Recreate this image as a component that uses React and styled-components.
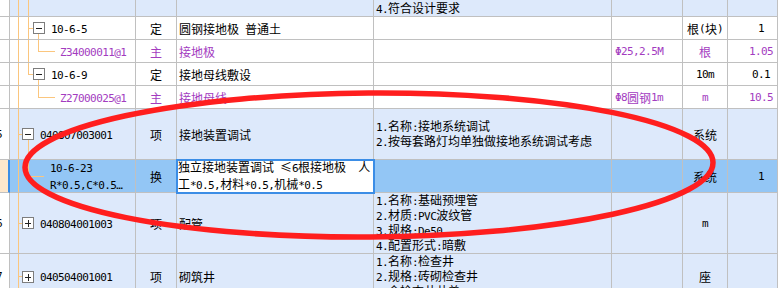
import React from "react";
import styled, { createGlobalStyle } from "styled-components";

const COLS = "10px 126px 41px 197px 238px 71px 45px 1fr";
const LINE = "#c0c0c0";
const TREE = "#fbc67e";
const PURPLE = "#a33cbf";

const tones = {
  white: "#ffffff",
  item: "#dde9fb",
  selected: "#93c6f5",
};

const GlobalStyle = createGlobalStyle`
  html, body {
    margin: 0;
    padding: 0;
    background: #ffffff;
  }
  body {
    overflow: hidden;
  }
`;

const Viewport = styled.div`
  position: relative;
  width: 778px;
  height: 288px;
  overflow: hidden;
  font-family: "Noto Sans CJK SC", sans-serif;
  font-size: 12px;
  color: #000;
`;

const Table = styled.div`
  display: flex;
  flex-direction: column;
`;

const Row = styled.div`
  display: grid;
  grid-template-columns: ${COLS};
  flex-shrink: 0;
  height: ${(p) => p.$h}px;
  margin-top: ${(p) => p.$offset || 0}px;
  background: ${(p) => tones[p.$tone]};
  color: ${(p) => (p.$purple ? PURPLE : "#000")};
`;

const Cell = styled.div`
  position: relative;
  box-sizing: border-box;
  display: flex;
  align-items: center;
  justify-content: ${(p) =>
    p.$align === "center" ? "center" : p.$align === "right" ? "flex-end" : "flex-start"};
  padding: 0 ${(p) => p.$pr ?? 2}px 0 ${(p) => p.$pl ?? 2}px;
  border-right: 1px solid ${LINE};
  border-bottom: 1px solid ${LINE};
  overflow: hidden;
  white-space: pre;
  line-height: 13px;
`;

const RowHead = styled(Cell)`
  justify-content: flex-end;
  padding: 0 7px 0 0;
  background: ${(p) => (p.$active ? "#fde7cc" : "#ffffff")};
  border-right: ${(p) => (p.$active ? "2px solid #3b8de6" : `1px solid ${LINE}`)};
`;

const CodeCell = styled(Cell)`
  padding-left: ${(p) => p.$indent}px;
  gap: ${(p) => p.$gap}px;
`;

const EditCell = styled(Cell)`
  z-index: 2;
  padding-left: 1px;
  background: #ffffff;
  outline: 2px solid #3b8de6;
  outline-offset: -1px;
`;

const Lines = styled.div`
  position: relative;
  display: flex;
  flex-direction: column;
  line-height: ${(p) => p.$lh || 13}px;
  white-space: pre;
`;

const GuideLayer = styled.svg`
  position: absolute;
  left: 0;
  top: 0;
  width: 100%;
  height: 100%;
  pointer-events: none;
`;

const ToggleBox = styled.svg`
  position: relative;
  flex-shrink: 0;
  display: block;
`;

const Lat = styled.span`
  font-family: "DejaVu Sans Mono", "Liberation Mono", monospace;
  font-size: 11px;
  letter-spacing: -0.6px;
`;

const Annotation = styled.svg`
  position: absolute;
  left: 0;
  top: 0;
  pointer-events: none;
`;

const LATIN_SPLIT = /([\x20-\x7e\u03a6\u2026]+)/;
const LATIN_ONLY = /^[\x20-\x7e\u03a6\u2026]+$/;

function Txt({ children }) {
  const parts = String(children).split(LATIN_SPLIT);
  return (
    <>
      {parts.map((p, i) =>
        p === "" ? null : LATIN_ONLY.test(p) ? (
          <Lat key={i}>{p}</Lat>
        ) : (
          <React.Fragment key={i}>{p}</React.Fragment>
        )
      )}
    </>
  );
}

function Toggle({ open }) {
  return (
    <ToggleBox width="12" height="12" viewBox="0 0 12 12" shapeRendering="crispEdges">
      <rect x="0.5" y="0.5" width="11" height="11" fill="#fff" stroke="#7d7d7d" />
      <line x1="3" y1="6.5" x2="9" y2="6.5" stroke="#222" />
      {!open && <line x1="6.5" y1="3" x2="6.5" y2="10" stroke="#222" />}
    </ToggleBox>
  );
}

// tree guide segments, in cell coordinates
function guides(kind, h, last) {
  const mid = Math.floor((h - 1) / 2);
  const v = (x, y1, y2) => ({ x1: x + 0.5, y1, x2: x + 0.5, y2 });
  const hz = (x1, x2) => ({ x1, y1: mid + 0.5, x2, y2: mid + 0.5 });
  switch (kind) {
    case "item":
      return [v(8, 0, h), hz(8, 12)];
    case "itemOpen":
      return [v(8, 0, h), hz(8, 12), v(18, mid + 6, h)];
    case "quota":
      return [v(8, 0, h), v(18, 0, last ? mid : h), hz(18, 23), v(28, mid + 6, h)];
    case "main":
      return [v(8, 0, h), ...(last ? [] : [v(18, 0, h)]), v(28, 0, mid + 1), hz(28, 45)];
    case "sub":
      return [v(8, 0, h), v(18, 0, mid + 1), hz(18, 34)];
    default:
      return [v(8, 0, h)];
  }
}

const layout = {
  item: { indent: 12, gap: 6, toggle: true },
  itemOpen: { indent: 12, gap: 6, toggle: true },
  quota: { indent: 23, gap: 6, toggle: true },
  main: { indent: 50, gap: 0 },
  sub: { indent: 40, gap: 0 },
};

const rows = [
  {
    h: 62,
    offset: -45,
    tone: "item",
    no: "4",
    kind: "itemOpen",
    code: "040807001001",
    type: "项",
    name: "接地极",
    desc: ["1.名称:接地极", "2.材质:圆钢", "3.规格:Φ25,L=2.5m", "4.符合设计要求"],
    unit: "根",
  },
  { h: 23, tone: "white", kind: "quota", code: "10-6-5", type: "定", name: "圆钢接地极 普通土", unit: "根(块)", qty: "1", pr: 13 },
  { h: 23, tone: "white", kind: "main", purple: true, code: "Z34000011@1", type: "主", name: "接地极", spec: "Φ25,2.5M", unit: "根", qty: "1.05", pr: 4 },
  { h: 23, tone: "white", kind: "quota", last: true, code: "10-6-9", type: "定", name: "接地母线敷设", unit: "10m", qty: "0.1", pr: 7 },
  { h: 23, tone: "white", kind: "main", last: true, purple: true, code: "Z27000025@1", type: "主", name: "接地母线", spec: "Φ8圆钢1m", unit: "m", qty: "10.5", pr: 4 },
  {
    h: 51,
    tone: "item",
    no: "5",
    kind: "itemOpen",
    code: "040807003001",
    type: "项",
    name: "接地装置调试",
    desc: ["1.名称:接地系统调试", "2.按每套路灯均单独做接地系统调试考虑"],
    unit: "系统",
  },
  {
    h: 33,
    tone: "selected",
    active: true,
    kind: "sub",
    code: ["10-6-23", "R*0.5,C*0.5…"],
    type: "换",
    edit: ["独立接地装置调试 ≤6根接地极  人", "工*0.5,材料*0.5,机械*0.5"],
    unit: "系统",
    qty: "1",
    pr: 13,
  },
  {
    h: 61,
    tone: "item",
    no: "6",
    kind: "item",
    code: "040804001003",
    type: "项",
    name: "配管",
    desc: ["1.名称:基础预埋管", "2.材质:PVC波纹管", "3.规格:De50", "4.配置形式:暗敷"],
    unit: "m",
  },
  {
    h: 46,
    tone: "item",
    no: "7",
    kind: "item",
    code: "040504001001",
    type: "项",
    name: "砌筑井",
    desc: ["1.名称:检查井", "2.规格:砖砌检查井", "3.含检查井井盖"],
    unit: "座",
  },
];

function CodeColumn({ row }) {
  const cfg = layout[row.kind];
  const segs = guides(row.kind, row.h, row.last);
  return (
    <CodeCell $indent={cfg.indent} $gap={cfg.gap} $pr={0}>
      <GuideLayer>
        {segs.map((s, i) => (
          <line key={i} {...s} stroke={TREE} strokeWidth="1" shapeRendering="crispEdges" />
        ))}
      </GuideLayer>
      {cfg.toggle && <Toggle open={row.kind !== "item"} />}
      <Lines $lh={15}>
        {(Array.isArray(row.code) ? row.code : [row.code]).map((c) => (
          <span key={c}>
            <Txt>{c}</Txt>
          </span>
        ))}
      </Lines>
    </CodeCell>
  );
}

function GridRow({ row }) {
  return (
    <Row $h={row.h} $offset={row.offset} $tone={row.tone} $purple={row.purple}>
      <RowHead $active={row.active}>{row.no && <Txt>{row.no}</Txt>}</RowHead>
      <CodeColumn row={row} />
      <Cell $align="center">{row.type}</Cell>
      {row.edit ? (
        <EditCell>
          <Lines $lh={15}>
            {row.edit.map((t) => (
              <span key={t}>
                <Txt>{t}</Txt>
              </span>
            ))}
          </Lines>
        </EditCell>
      ) : (
        <Cell>
          <Txt>{row.name}</Txt>
        </Cell>
      )}
      <Cell>
        <Lines>
          {(row.desc || []).map((d) => (
            <span key={d}>
              <Txt>{d}</Txt>
            </span>
          ))}
        </Lines>
      </Cell>
      <Cell $pl={3}>{row.spec && <Txt>{row.spec}</Txt>}</Cell>
      <Cell $align="center" $pl={0} $pr={0}>
        {row.unit && <Txt>{row.unit}</Txt>}
      </Cell>
      <Cell $align="right" $pr={row.pr}>
        {row.qty && <Txt>{row.qty}</Txt>}
      </Cell>
    </Row>
  );
}

export default function App() {
  return (
    <>
      <GlobalStyle />
      <Viewport>
        <Table>
          {rows.map((r, i) => (
            <GridRow key={i} row={r} />
          ))}
        </Table>
        <Annotation width="778" height="288" viewBox="0 0 778 288">
          <ellipse
            cx="369"
            cy="165"
            rx="344"
            ry="72"
            fill="none"
            stroke="#ff1e1e"
            strokeWidth="5.5"
            transform="rotate(-0.4 369 165)"
          />
        </Annotation>
      </Viewport>
    </>
  );
}
